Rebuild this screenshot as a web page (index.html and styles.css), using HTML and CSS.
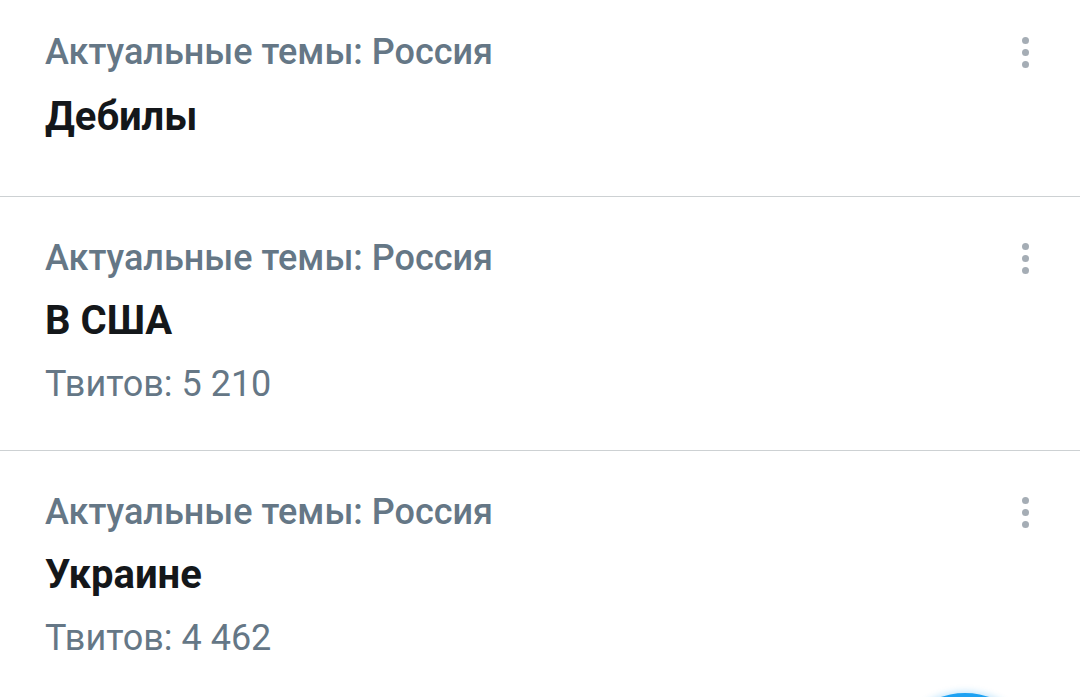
FILE: index.html
```html
<!DOCTYPE html>
<html lang="ru">
<head>
<meta charset="utf-8">
<title>Актуальные темы</title>
<link rel="stylesheet" href="styles.css">
</head>
<body>
<main class="trends">
  <article class="trend trend--first">
    <div class="trend-head">
      <span class="trend-category">Актуальные темы: Россия</span>
      <span class="more" aria-label="Ещё"><i></i><i></i><i></i></span>
    </div>
    <div class="trend-title">Дебилы</div>
  </article>
  <article class="trend">
    <div class="trend-head">
      <span class="trend-category">Актуальные темы: Россия</span>
      <span class="more" aria-label="Ещё"><i></i><i></i><i></i></span>
    </div>
    <div class="trend-title">В США</div>
    <div class="trend-count">Твитов: 5 210</div>
  </article>
  <article class="trend">
    <div class="trend-head">
      <span class="trend-category">Актуальные темы: Россия</span>
      <span class="more" aria-label="Ещё"><i></i><i></i><i></i></span>
    </div>
    <div class="trend-title">Украине</div>
    <div class="trend-count">Твитов: 4 462</div>
  </article>
</main>
<div class="fab-clip"><div class="fab"></div></div>
</body>
</html>
```
FILE: styles.css
```css
html, body {
  margin: 0;
  padding: 0;
  background: #ffffff;
  height: 697px;
  overflow: hidden;
}
body {
  font-family: Roboto, "Noto Sans", sans-serif;
  position: relative;
}
.trends {
  display: flex;
  flex-direction: column;
}
.trend {
  padding: 39px 43px 44px 45px;
  border-bottom: 1px solid #cdd1d3;
  display: flex;
  flex-direction: column;
  gap: 19px;
}
.trend--first {
  padding-top: 30px;
  padding-bottom: 57px;
  gap: 21px;
}
.trend-head {
  display: flex;
  align-items: center;
  justify-content: space-between;
  height: 44px;
}
.trend-category {
  font-size: 36px;
  font-weight: 500;
  color: #657786;
  line-height: 44px;
}
.trend-title {
  font-size: 40px;
  font-weight: 700;
  color: #14171a;
  line-height: 44px;
}
.trend-count {
  font-size: 36px;
  font-weight: 400;
  color: #657786;
  line-height: 44px;
}
.more {
  width: 24px;
  height: 36px;
  display: flex;
  flex-direction: column;
  align-items: center;
  justify-content: center;
  gap: 5px;
}
.more i {
  display: block;
  width: 7px;
  height: 7px;
  border-radius: 50%;
  background: #a5adb5;
}
.fab-clip {
  position: absolute;
  left: 860px;
  top: 680px;
  width: 220px;
  height: 17px;
  overflow: hidden;
}
.fab {
  position: absolute;
  left: 30px;
  top: 13px;
  width: 150px;
  height: 150px;
  border-radius: 50%;
  background: #1da1f2;
  box-shadow: 0 -2px 6px rgba(29, 161, 242, 0.25);
}
```
